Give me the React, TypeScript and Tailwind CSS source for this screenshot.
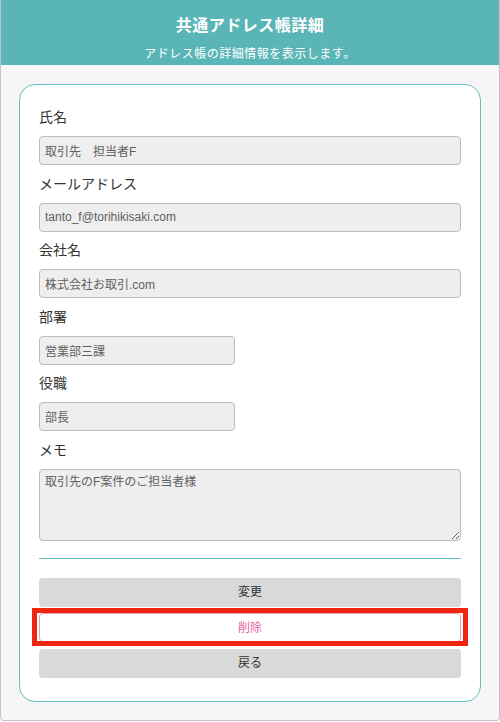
import React from 'react';

const fields = [
  { label: '氏名', value: '取引先　担当者F', short: false },
  { label: 'メールアドレス', value: 'tanto_f@torihikisaki.com', short: false },
  { label: '会社名', value: '株式会社お取引.com', short: false },
  { label: '部署', value: '営業部三課', short: true },
  { label: '役職', value: '部長', short: true },
];

const font = { fontFamily: '"Liberation Sans", "Noto Sans CJK JP", sans-serif' };

export default function App() {
  return (
    <div
      className="w-[500px] h-[721px] bg-[#f6f6f6] border-x border-b border-[#c4c4c4] rounded-b-[4px] overflow-hidden"
      style={font}
    >
      <header className="h-[65px] bg-[#5ab5b7] flex flex-col items-center text-white">
        <h1 className="mt-[14px] text-[16px] leading-[24px] font-bold tracking-[0.5px]">共通アドレス帳詳細</h1>
        <p className="mt-[7px] text-[12px] leading-[18px] tracking-[0.5px]">アドレス帳の詳細情報を表示します。</p>
      </header>

      <div className="px-[18px] pt-[19px]">
        <div className="bg-white border border-[#62c1c3] rounded-[16px] px-[19px] pt-[22px] pb-[23px]">
          <div className="flex flex-col gap-[8.5px]">
            {fields.map((f) => (
              <div key={f.label}>
                <label className="block h-[20px] mb-[9px] text-[14px] leading-[20px] text-[#333]">{f.label}</label>
                <input
                  readOnly
                  value={f.value}
                  className={`${f.short ? 'w-[196px]' : 'w-full'} h-[29px] px-[5px] bg-[#eeeeee] border border-[#bdbdbd] rounded-[4px] text-[12px] text-[#606060] outline-none`}
                  style={font}
                />
              </div>
            ))}
            <div>
              <label className="block h-[20px] mb-[9px] text-[14px] leading-[20px] text-[#333]">メモ</label>
              <textarea
                readOnly
                value="取引先のF案件のご担当者様"
                className="block w-full h-[72px] px-[5px] py-[4px] bg-[#eeeeee] border border-[#bdbdbd] rounded-[4px] text-[12px] leading-[16px] text-[#606060] outline-none"
                style={font}
              />
            </div>
          </div>

          <hr className="mt-[17px] border-0 border-t border-[#62c1c3]" />

          <div className="mt-[19px] flex flex-col gap-[6.5px]">
            <button className="h-[29px] rounded-[4px] bg-[#d9d9d9] text-[12px] text-[#333]">変更</button>
            <div className="relative">
              <button className="w-full h-[29px] rounded-[4px] bg-white border border-[#ec9cc0] text-[12px] text-[#e9609f]">
                削除
              </button>
              <div className="absolute left-[-7px] right-[-7px] top-[-5px] bottom-[-4px] border-[5px] border-[#f0250f] pointer-events-none" />
            </div>
            <button className="h-[29px] rounded-[4px] bg-[#d9d9d9] text-[12px] text-[#333]">戻る</button>
          </div>
        </div>
      </div>
    </div>
  );
}
